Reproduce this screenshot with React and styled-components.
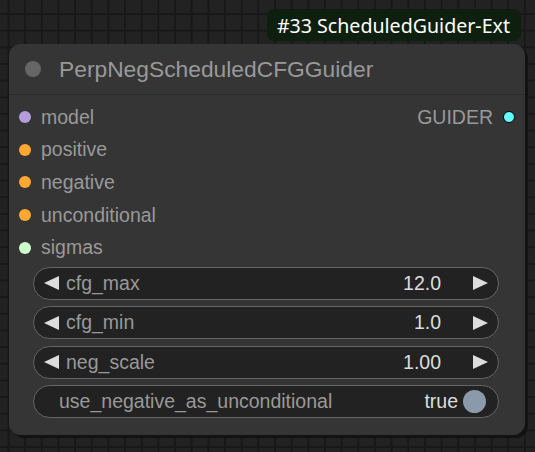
import React from "react";
import styled, { createGlobalStyle } from "styled-components";

const GlobalStyle = createGlobalStyle`
  html, body {
    margin: 0;
    padding: 0;
    width: 535px;
    height: 452px;
    overflow: hidden;
    background-color: #222222;
    background-image:
      linear-gradient(to right, #181818 2px, transparent 2px),
      linear-gradient(to bottom, #181818 2px, transparent 2px);
    background-size: 16.67px 16.67px;
    background-position: 7.5px 13px;
    font-family: "Liberation Sans", Arial, sans-serif;
  }
`;

const Canvas = styled.div`
  display: flex;
  flex-direction: column;
  align-items: flex-end;
  width: 516px;
  margin-left: 9px;
  padding-top: 9px;
`;

const Badge = styled.div`
  display: flex;
  align-items: center;
  height: 32px;
  padding: 0 11px 0 10px;
  margin-right: 4px;
  margin-bottom: 3px;
  border-radius: 7px;
  background: #0f1f0f;
  color: #ffffff;
  font-family: "Noto Sans", "Open Sans", sans-serif;
  font-size: 19.6px;
  white-space: nowrap;
`;

const Node = styled.div`
  display: flex;
  flex-direction: column;
  width: 516px;
  height: 391px;
  box-sizing: border-box;
  background: #353535;
  border-radius: 12px;
  box-shadow: 3px 3px 0 #121212;
`;

const TitleBar = styled.div`
  display: flex;
  align-items: center;
  height: 50px;
  padding-left: 16px;
  gap: 18px;
  border-bottom: 1px solid #2b2b2b;
  color: #999999;
  font-size: 22.8px;
`;

const TitleDot = styled.span`
  width: 16px;
  height: 16px;
  border-radius: 50%;
  background: #666666;
`;

const Slots = styled.div`
  display: flex;
  flex-direction: column;
  padding-top: 6px;
`;

const SlotRow = styled.div`
  display: flex;
  align-items: center;
  justify-content: space-between;
  height: 32.6px;
  padding: 0 10px;
  color: #999999;
  font-size: 19.5px;
`;

const Slot = styled.div`
  display: flex;
  align-items: center;
  gap: 10px;
`;

const Dot = styled.span`
  width: 12px;
  height: 12px;
  border-radius: 50%;
  box-sizing: border-box;
  background: ${(props) => props.color};
  border: ${(props) => (props.outlined ? "1.5px solid #000" : "none")};
`;

const Widgets = styled.div`
  display: flex;
  flex-direction: column;
  gap: 6.3px;
  margin: 3px 26px 0 24px;
`;

const Widget = styled.div`
  display: flex;
  align-items: center;
  height: 33px;
  box-sizing: border-box;
  border: 1px solid #666666;
  border-radius: 17px;
  background: #222222;
  font-size: 19.5px;
  padding: ${(props) => (props.toggle ? "0 12px 0 25px" : "0 10px 0 10px")};
`;

const Arrow = styled.span`
  width: 0;
  height: 0;
  border-top: 7.5px solid transparent;
  border-bottom: 7.5px solid transparent;
  ${(props) =>
    props.right
      ? "border-left: 15px solid #dddddd; margin-left: 32px;"
      : "border-right: 15px solid #dddddd; margin-right: 7px;"}
`;

const Label = styled.span`
  flex: 1;
  color: #999999;
`;

const Value = styled.span`
  color: #dddddd;
`;

const Knob = styled.span`
  width: 23px;
  height: 23px;
  margin-left: 5px;
  border-radius: 50%;
  background: #8a9aab;
`;

const inputs = [
  { name: "model", color: "#b39ddb" },
  { name: "positive", color: "#ffa931" },
  { name: "negative", color: "#ffa931" },
  { name: "unconditional", color: "#ffa931" },
  { name: "sigmas", color: "#cdffcd" },
];

const numbers = [
  { name: "cfg_max", value: "12.0" },
  { name: "cfg_min", value: "1.0" },
  { name: "neg_scale", value: "1.00" },
];

export default function App() {
  return (
    <>
      <GlobalStyle />
      <Canvas>
        <Badge>#33 ScheduledGuider-Ext</Badge>
        <Node>
          <TitleBar>
            <TitleDot />
            PerpNegScheduledCFGGuider
          </TitleBar>
          <Slots>
            {inputs.map((input, i) => (
              <SlotRow key={input.name}>
                <Slot>
                  <Dot color={input.color} />
                  {input.name}
                </Slot>
                {i === 0 && (
                  <Slot>
                    GUIDER
                    <Dot color="#66ffff" outlined />
                  </Slot>
                )}
              </SlotRow>
            ))}
          </Slots>
          <Widgets>
            {numbers.map((w) => (
              <Widget key={w.name}>
                <Arrow />
                <Label>{w.name}</Label>
                <Value>{w.value}</Value>
                <Arrow right />
              </Widget>
            ))}
            <Widget toggle>
              <Label>use_negative_as_unconditional</Label>
              <Value>true</Value>
              <Knob />
            </Widget>
          </Widgets>
        </Node>
      </Canvas>
    </>
  );
}
